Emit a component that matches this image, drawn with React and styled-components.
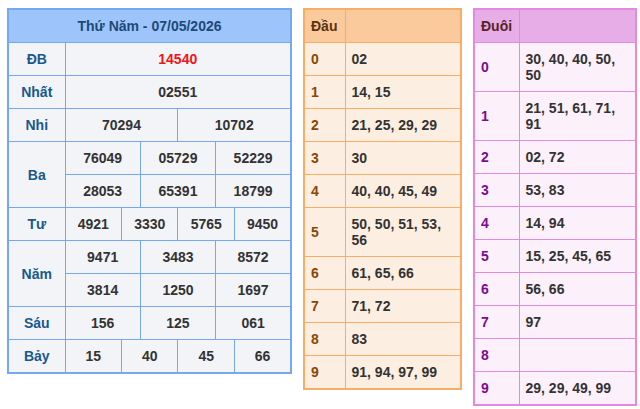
import React from "react";
import styled, { createGlobalStyle } from "styled-components";

const Global = createGlobalStyle`
  body {
    margin: 0;
    background: #fff;
    font-family: "Liberation Sans", Arial, sans-serif;
  }
`;

const Page = styled.div`
  display: flex;
  align-items: flex-start;
  gap: 11px;
  padding: 8px 3px 0 7px;
`;

const Table = styled.table`
  border-collapse: collapse;
  table-layout: fixed;
  width: ${(p) => p.$w}px;
  border: 2px solid ${(p) => p.$border};
  font-size: 14px;
  font-weight: bold;
  line-height: 16px;
  td, th {
    border: 1px solid ${(p) => p.$border};
  }
`;

const HeadCell = styled.th`
  background: ${(p) => p.$bg};
  color: ${(p) => p.$color};
  height: 32px;
  padding: 0 6px;
  text-align: ${(p) => (p.$left ? "left" : "center")};
  font-weight: bold;
`;

const Label = styled.td`
  background: ${(p) => p.$bg};
  color: ${(p) => p.$color};
  text-align: ${(p) => (p.$left ? "left" : "center")};
  padding: 8px 6px;
  height: 16px;
`;

const Num = styled.td`
  background: ${(p) => p.$bg};
  color: ${(p) => (p.$red ? "#f2141a" : "#333")};
  text-align: ${(p) => (p.$left ? "left" : "center")};
  padding: 8px 6px;
  height: 16px;
`;

const KQ = {
  border: "#74a8f3",
  head: "#9ec4fc",
  body: "#f3f4f8",
  label: "#17598e",
};

const rows = [
  { label: "ĐB", values: [["14540"]], red: true },
  { label: "Nhất", values: [["02551"]] },
  { label: "Nhi", values: [["70294", "10702"]] },
  { label: "Ba", values: [["76049", "05729", "52229"], ["28053", "65391", "18799"]] },
  { label: "Tư", values: [["4921", "3330", "5765", "9450"]] },
  { label: "Năm", values: [["9471", "3483", "8572"], ["3814", "1250", "1697"]] },
  { label: "Sáu", values: [["156", "125", "061"]] },
  { label: "Bảy", values: [["15", "40", "45", "66"]] },
];

const dau = [
  "02",
  "14, 15",
  "21, 25, 29, 29",
  "30",
  "40, 40, 45, 49",
  "50, 50, 51, 53, 56",
  "61, 65, 66",
  "71, 72",
  "83",
  "91, 94, 97, 99",
];

const duoi = [
  "30, 40, 40, 50, 50",
  "21, 51, 61, 71, 91",
  "02, 72",
  "53, 83",
  "14, 94",
  "15, 25, 45, 65",
  "56, 66",
  "97",
  "",
  "29, 29, 49, 99",
];

function ResultTable() {
  return (
    <Table $w={285} $border={KQ.border}>
      <colgroup>
        <col style={{ width: 57 }} />
        {Array.from({ length: 12 }).map((_, i) => (
          <col key={i} />
        ))}
      </colgroup>
      <thead>
        <tr>
          <HeadCell colSpan={13} $bg={KQ.head} $color="#1c4a78">
            Thứ Năm - 07/05/2026
          </HeadCell>
        </tr>
      </thead>
      <tbody>
        {rows.map((r) =>
          r.values.map((line, li) => (
            <tr key={r.label + li}>
              {li === 0 && (
                <Label rowSpan={r.values.length} $bg={KQ.body} $color={KQ.label}>
                  {r.label}
                </Label>
              )}
              {line.map((v) => (
                <Num key={v} colSpan={12 / line.length} $bg={KQ.body} $red={r.red}>
                  {v}
                </Num>
              ))}
            </tr>
          ))
        )}
      </tbody>
    </Table>
  );
}

function LotoTable({ title, data, w, labelW, c }) {
  return (
    <Table $w={w} $border={c.border}>
      <colgroup>
        <col style={{ width: labelW }} />
        <col />
      </colgroup>
      <thead>
        <tr>
          <HeadCell $left $bg={c.head} $color={c.title}>
            {title}
          </HeadCell>
          <HeadCell $bg={c.head} />
        </tr>
      </thead>
      <tbody>
        {data.map((v, i) => (
          <tr key={i}>
            <Label $left $bg={c.body} $color={c.label}>
              {i}
            </Label>
            <Num $left $bg={c.body}>
              {v}
            </Num>
          </tr>
        ))}
      </tbody>
    </Table>
  );
}

const orange = {
  border: "#f7ad66",
  head: "#fac99c",
  body: "#fdeee2",
  label: "#8a4706",
  title: "#5b3312",
};

const pink = {
  border: "#e48ade",
  head: "#e6ade6",
  body: "#fcf0fb",
  label: "#7c0b8e",
  title: "#5a2424",
};

export default function App() {
  return (
    <>
      <Global />
      <Page>
        <ResultTable />
        <LotoTable title="Đầu" data={dau} w={159} labelW={41} c={orange} />
        <LotoTable title="Đuôi" data={duoi} w={164} labelW={45} c={pink} />
      </Page>
    </>
  );
}
